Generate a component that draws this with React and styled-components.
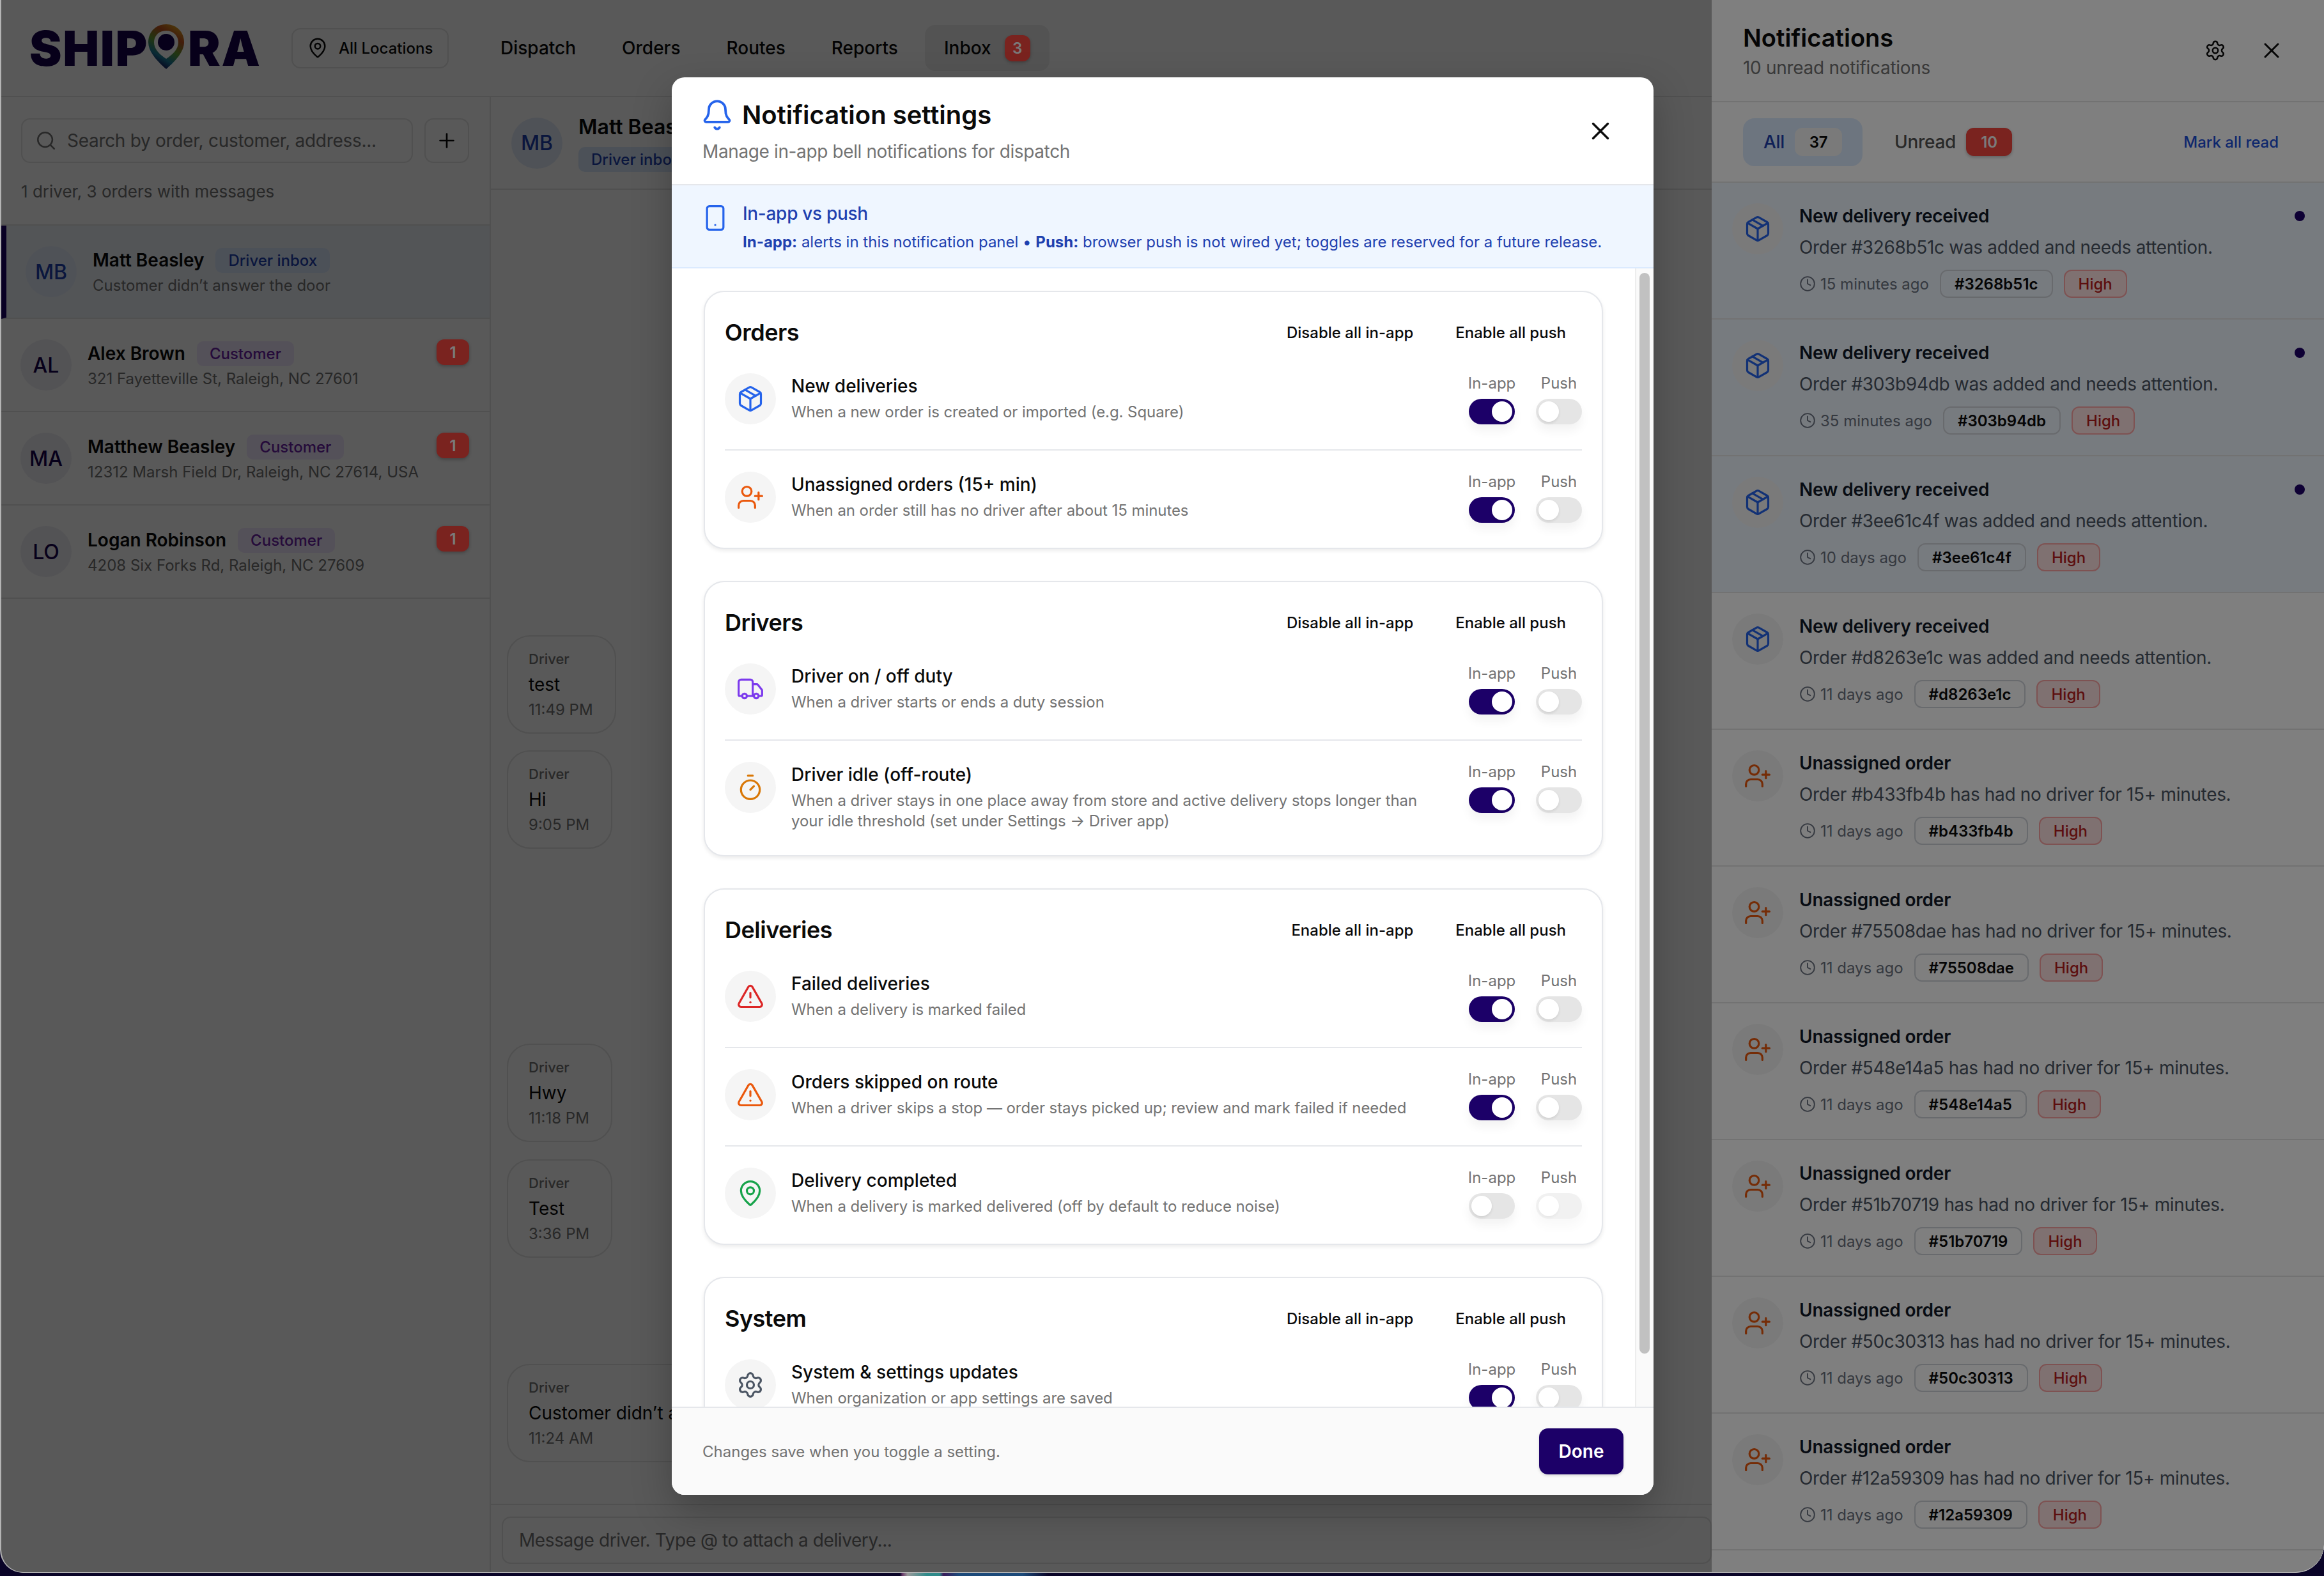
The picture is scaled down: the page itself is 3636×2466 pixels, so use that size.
import React from "react";
import styled, { createGlobalStyle } from "styled-components";
import {
  Bell,
  Clock,
  MapPin,
  Package,
  Plus,
  Search,
  Settings,
  Smartphone,
  Timer,
  TriangleAlert,
  Truck,
  UserPlus,
  X,
} from "lucide-react";

const NAVY = "#1c0068";

const GlobalStyle = createGlobalStyle`
  html, body {
    margin: 0;
    padding: 0;
    width: 3636px;
    height: 2466px;
    overflow: hidden;
    background: #0a0428;
  }
  * { box-sizing: border-box; }
  body { font-family: Inter, "Noto Sans", sans-serif; color: #0a0a0a; }
`;

const Screen = styled.div`
  position: relative;
  width: 3636px;
  height: 2466px;
  display: flex;
  flex-direction: column;
`;

const Wallpaper = styled.div`
  height: 5px;
  background: linear-gradient(
    90deg,
    #0a0428 0 1408px,
    #6a3a6a 1412px,
    #9a9a9a 1420px,
    #2f8a8a 1450px 1470px,
    #3a1a5a 1476px,
    #1c4a7a 1500px 1600px,
    #0a0428 1640px
  );
`;

const Window = styled.div`
  position: relative;
  height: 2461px;
  display: flex;
  overflow: hidden;
  background: #fff;
  border-left: 2px solid #b4b4b4;
  border-bottom: 1px solid #b4b4b4;
  border-radius: 0 0 44px 36px;
`;

const Main = styled.div`
  position: relative;
  flex: none;
  width: 2676px;
  display: flex;
  flex-direction: column;
  &::after {
    content: "";
    position: absolute;
    inset: 0;
    z-index: 1;
    background: rgba(0, 0, 0, 0.3);
  }
`;

const TopBar = styled.header`
  flex: none;
  height: 152px;
  display: flex;
  align-items: center;
  padding-left: 44px;
  border-bottom: 2px solid #e5e5e5;
`;

const Logo = styled.div`
  display: flex;
  align-items: center;
  width: 361px;
  font-family: Inter, sans-serif;
  font-weight: 900;
  font-size: 76px;
  line-height: 1;
  color: #16004d;
  letter-spacing: 1.6px;
  svg { flex: none; margin: -4px 4px 0 -2px; }
`;

const LocationButton = styled.div`
  margin-left: 49px;
  width: 246px;
  height: 63px;
  display: flex;
  align-items: center;
  gap: 16px;
  padding-left: 22px;
  border: 2px solid #e5e5e5;
  border-radius: 14px;
  font-size: 24px;
  font-weight: 500;
`;

const Nav = styled.nav`
  margin-left: 51px;
  display: flex;
  gap: 12px;
`;

const NavItem = styled.div`
  height: 72px;
  display: flex;
  align-items: center;
  gap: 21px;
  padding: 0 30px;
  border-radius: 16px;
  font-size: 28px;
  font-weight: 500;
  background: ${(p) => (p.$active ? "#f0f0f0" : "transparent")};
`;

const CountBadge = styled.span`
  position: relative;
  z-index: 2;
  display: inline-flex;
  align-items: center;
  justify-content: center;
  width: ${(p) => p.$w || 51}px;
  height: ${(p) => p.$h || 40}px;
  border-radius: 12px;
  background: #f4463f;
  color: #f5f5f5;
  font-size: 24px;
  font-weight: 600;
  box-shadow: 0 2px 5px rgba(0, 0, 0, 0.25);
`;

const Body = styled.div`
  flex: 1;
  min-height: 0;
  display: flex;
`;

const Sidebar = styled.aside`
  flex: none;
  width: 766px;
  border-right: 2px solid #e5e5e5;
`;

const SidebarTop = styled.div`
  height: 201px;
  padding: 33px 32px 0 31px;
  border-bottom: 2px solid #e5e5e5;
`;

const SearchRow = styled.div`
  display: flex;
  gap: 18px;
`;

const SearchBox = styled.div`
  flex: 1;
  height: 70px;
  display: flex;
  align-items: center;
  gap: 16px;
  padding-left: 20px;
  border: 2px solid #e5e5e5;
  border-radius: 14px;
  font-size: 28px;
  letter-spacing: -0.3px;
  color: #737373;
`;

const AddButton = styled.div`
  flex: none;
  width: 70px;
  height: 70px;
  display: flex;
  align-items: center;
  justify-content: center;
  border: 2px solid #e5e5e5;
  border-radius: 14px;
`;

const ListCount = styled.div`
  margin-top: 27px;
  font-size: 26px;
  line-height: 36px;
  color: #737373;
`;

const ThreadRow = styled.div`
  height: 146px;
  display: flex;
  align-items: center;
  gap: 25px;
  padding: 0 32px 0 30px;
  border-bottom: 2px solid #e5e5e5;
  ${CountBadge} {
    margin-bottom: 40px;
  }
  ${(p) => p.$active && `
    background: #f0f4fa;
    border-left: 8px solid ${NAVY};
  `}
`;

const Avatar = styled.div`
  flex: none;
  width: 80px;
  height: 80px;
  border-radius: 50%;
  display: flex;
  align-items: center;
  justify-content: center;
  font-size: 32px;
  font-weight: 500;
  background: ${(p) => (p.$blue ? "#e4edfb" : "#f0eff5")};
  color: ${(p) => (p.$blue ? "#1e40af" : "#16004d")};
`;

const ThreadText = styled.div`
  flex: 1;
  min-width: 0;
`;

const NameLine = styled.div`
  display: flex;
  align-items: center;
  gap: 18px;
  height: 40px;
  font-size: 28px;
  font-weight: 600;
`;

const Tag = styled.span`
  height: 39px;
  display: inline-flex;
  align-items: center;
  padding: 0 20px;
  border-radius: 10px;
  font-size: 24px;
  font-weight: 500;
  background: ${(p) => (p.$purple ? "#f3e8ff" : "#dbeafe")};
  color: ${(p) => (p.$purple ? "#6b21a8" : "#1e40af")};
`;

const ThreadSub = styled.div`
  margin-top: 4px;
  font-size: 24px;
  line-height: 32px;
  color: #737373;
`;

const Chat = styled.section`
  flex: 1;
  min-width: 0;
  display: flex;
  flex-direction: column;
`;

const ChatHead = styled.div`
  flex: none;
  height: 145px;
  display: flex;
  align-items: center;
  gap: 25px;
  padding-left: 32px;
  border-bottom: 2px solid #e5e5e5;
`;

const ChatName = styled.div`
  font-size: 32px;
  font-weight: 600;
  line-height: 40px;
  margin-bottom: 11px;
`;

const Messages = styled.div`
  flex: 1;
  min-height: 0;
  display: flex;
  flex-direction: column;
  align-items: flex-start;
  justify-content: flex-end;
  padding: 0 0 65px 25px;
  overflow: hidden;
`;

const Bubble = styled.div`
  margin-top: ${(p) => p.$gap}px;
  padding: 15px 34px 15px 32px;
  border: 2px solid #e5e5e5;
  border-radius: 36px;
  white-space: nowrap;
`;

const BubbleFrom = styled.div`
  font-size: 22px;
  line-height: 40px;
  font-weight: 500;
  color: #737373;
`;

const BubbleText = styled.div`
  font-size: 28px;
  line-height: 40px;
`;

const BubbleTime = styled.div`
  font-size: 24px;
  line-height: 40px;
  color: #737373;
`;

const Composer = styled.div`
  flex: none;
  height: 107px;
  padding: 18px 0 0 17px;
  border-top: 2px solid #e5e5e5;
`;

const ComposerField = styled.div`
  height: 74px;
  display: flex;
  align-items: center;
  padding-left: 25px;
  border: 2px solid #e5e5e5;
  border-radius: 14px;
  font-size: 28px;
  letter-spacing: -0.42px;
  color: #737373;
`;

const Panel = styled.aside`
  flex: 1;
  min-width: 0;
  display: flex;
  flex-direction: column;
  background: #fff;
`;

const PanelHead = styled.div`
  flex: none;
  height: 160px;
  display: flex;
  align-items: center;
  padding: 0 62px 0 49px;
  border-bottom: 2px solid #e5e5e5;
`;

const PanelTitles = styled.div`
  flex: 1;
`;

const PanelTitle = styled.div`
  font-size: 38px;
  line-height: 48px;
  font-weight: 600;
`;

const PanelSub = styled.div`
  margin-top: 5px;
  font-size: 28px;
  line-height: 36px;
  letter-spacing: -0.3px;
  color: #737373;
`;

const HeadIcons = styled.div`
  display: flex;
  align-items: center;
  gap: 51px;
`;

const Tabs = styled.div`
  flex: none;
  height: 126px;
  display: flex;
  align-items: center;
  gap: 18px;
  padding: 0 71px 0 49px;
  border-bottom: 2px solid #e5e5e5;
`;

const TabPill = styled.div`
  height: 75px;
  display: flex;
  align-items: center;
  gap: 16px;
  padding: 0 32px;
  border-radius: 18px;
  font-size: 28px;
  font-weight: 500;
  letter-spacing: -0.3px;
  color: ${(p) => (p.$active ? "#1e40af" : "#525252")};
  background: ${(p) => (p.$active ? "#dbeafe" : "transparent")};
`;

const TabCount = styled.span`
  width: 74px;
  height: 44px;
  display: flex;
  align-items: center;
  justify-content: center;
  border-radius: 12px;
  background: #f5f5f5;
  color: #0a0a0a;
  font-size: 24px;
  font-weight: 600;
`;

const MarkRead = styled.div`
  margin-left: auto;
  font-size: 24px;
  font-weight: 500;
  color: #1d4ed8;
`;

const Feed = styled.div`
  flex: 1;
  min-height: 0;
  overflow: hidden;
`;

const FeedRow = styled.div`
  height: 214px;
  display: flex;
  gap: 25px;
  padding: 32px 30px 0 32px;
  border-bottom: 2px solid #e5e5e5;
  background: ${(p) => (p.$unread ? "#eff6ff" : "#fff")};
`;

const IconDisc = styled.div`
  flex: none;
  width: 80px;
  height: 80px;
  border-radius: 50%;
  display: flex;
  align-items: center;
  justify-content: center;
  background: #f5f5f5;
  color: ${(p) => p.$color};
`;

const FeedText = styled.div`
  flex: 1;
  min-width: 0;
`;

const FeedTitle = styled.div`
  font-size: 28px;
  line-height: 40px;
  font-weight: 600;
  letter-spacing: -0.2px;
  color: #111827;
`;

const FeedDesc = styled.div`
  margin-top: 9px;
  font-size: 28px;
  line-height: 40px;
  letter-spacing: -0.33px;
  color: #4b5563;
`;

const FeedMeta = styled.div`
  margin-top: 15px;
  display: flex;
  align-items: center;
  gap: 17px;
`;

const TimeAgo = styled.div`
  display: flex;
  align-items: center;
  gap: 7px;
  font-size: 24px;
  color: #6b7280;
`;

const IdChip = styled.div`
  height: 44px;
  display: flex;
  align-items: center;
  padding: 0 21px;
  border: 2px solid #d1d5db;
  border-radius: 12px;
  font-size: 24px;
  font-weight: 600;
`;

const HighChip = styled.div`
  height: 44px;
  display: flex;
  align-items: center;
  padding: 0 21px;
  border: 2px solid #fca5a5;
  border-radius: 12px;
  background: #fee2e2;
  font-size: 24px;
  font-weight: 500;
  color: #b91c1c;
`;

const UnreadDot = styled.div`
  flex: none;
  width: 16px;
  height: 16px;
  margin-top: 12px;
  border-radius: 50%;
  background: ${NAVY};
`;

const Backdrop = styled.div`
  position: absolute;
  inset: 0;
  z-index: 3;
  background: rgba(0, 0, 0, 0.5);
`;

const Modal = styled.div`
  position: absolute;
  z-index: 4;
  left: 1049px;
  top: 121px;
  width: 1536px;
  height: 2218px;
  display: flex;
  flex-direction: column;
  overflow: hidden;
  background: #fff;
  border-radius: 20px;
  box-shadow: 0 24px 60px rgba(0, 0, 0, 0.25);
`;

const ModalHead = styled.div`
  flex: none;
  height: 169px;
  display: flex;
  align-items: center;
  justify-content: space-between;
  padding: 0 60px 0 48px;
  border-bottom: 2px solid #e5e7eb;
`;

const ModalTitleRow = styled.div`
  display: flex;
  align-items: center;
  gap: 13px;
  height: 50px;
  font-size: 40px;
  font-weight: 600;
  color: #0a0a0a;
  svg { margin-left: -3px; color: #2563eb; }
`;

const ModalSub = styled.div`
  margin-top: 14px;
  font-size: 28px;
  line-height: 36px;
  letter-spacing: -0.38px;
  color: #737373;
`;

const Banner = styled.div`
  flex: none;
  height: 130px;
  display: flex;
  gap: 21px;
  padding: 24px 0 0 46px;
  background: #eff6ff;
  border-bottom: 2px solid #dbeafe;
  color: #1e40af;
  svg { color: #2563eb; margin-top: 5px; flex: none; }
`;

const BannerTitle = styled.div`
  font-size: 28px;
  line-height: 40px;
  font-weight: 500;
  letter-spacing: -0.3px;
`;

const BannerText = styled.div`
  margin-top: 7px;
  font-size: 24px;
  line-height: 36px;
  b { font-weight: 700; }
`;

const ModalBody = styled.div`
  position: relative;
  flex: 1;
  min-height: 0;
  display: flex;
`;

const Sections = styled.div`
  flex: 1;
  min-width: 0;
  display: flex;
  flex-direction: column;
  gap: 50px;
  padding: 35px 50px 0;
  overflow: hidden;
`;

const Track = styled.div`
  position: relative;
  flex: none;
  width: 29px;
  border-left: 2px solid #ededed;
  background: #fafafa;
`;

const Thumb = styled.div`
  position: absolute;
  left: 5px;
  top: 7px;
  width: 16px;
  height: 1691px;
  border-radius: 8px;
  background: #c1c1c1;
`;

const Card = styled.section`
  flex: none;
  padding: 0 31px;
  border: 2px solid #e5e7eb;
  border-radius: 32px;
  background: #fff;
  box-shadow: 0 3px 6px rgba(0, 0, 0, 0.08);
`;

const CardHead = styled.div`
  display: flex;
  align-items: center;
  height: 62px;
  margin-top: 32px;
`;

const CardTitle = styled.h3`
  flex: 1;
  margin: 0;
  font-size: 36px;
  font-weight: 600;
  letter-spacing: -0.5px;
`;

const HeadAction = styled.div`
  margin-right: ${(p) => p.$gap}px;
  font-size: 24px;
  font-weight: 500;
`;

const SettingRow = styled.div`
  display: flex;
  gap: 24px;
  padding: 33px 0 39px;
  & + & {
    border-top: 2px solid #e5e7eb;
  }
`;

const SettingText = styled.div`
  flex: 1;
  min-width: 0;
`;

const SettingTitle = styled.div`
  font-size: 28px;
  line-height: 40px;
  font-weight: 500;
`;

const SettingDesc = styled.div`
  margin: 5px 0 -2px;
  max-width: 1000px;
  font-size: 24px;
  line-height: 32px;
  letter-spacing: -0.07px;
  color: #737373;
`;

const Toggles = styled.div`
  flex: none;
  display: flex;
  gap: 33px;
`;

const ToggleCol = styled.div`
  width: 72px;
  display: flex;
  flex-direction: column;
  align-items: center;
  gap: 8px;
  font-size: 24px;
  line-height: 32px;
  color: #737373;
  white-space: nowrap;
`;

const Toggle = styled.div`
  width: 72px;
  height: 40px;
  display: flex;
  align-items: center;
  justify-content: ${(p) => (p.$on ? "flex-end" : "flex-start")};
  padding: 0 4px;
  border-radius: 20px;
  background: ${(p) => (p.$on ? NAVY : "#e5e5e5")};
  opacity: ${(p) => (p.$disabled ? 0.5 : 1)};
  box-shadow: 0 10px 16px rgba(0, 0, 0, 0.05);
  &::after {
    content: "";
    width: 32px;
    height: 32px;
    border-radius: 50%;
    background: #fff;
    box-shadow: 0 2px 4px rgba(0, 0, 0, 0.1);
  }
`;

const ModalFoot = styled.div`
  position: relative;
  flex: none;
  height: 138px;
  display: flex;
  align-items: center;
  justify-content: space-between;
  padding: 0 47px 0 48px;
  border-top: 2px solid #e5e7eb;
  background: #fafafa;
  font-size: 24px;
  color: #737373;
`;

const DoneButton = styled.button`
  width: 132px;
  height: 72px;
  border: 0;
  border-radius: 14px;
  background: ${NAVY};
  color: #fff;
  font-family: inherit;
  font-size: 28px;
  font-weight: 600;
  box-shadow: 0 2px 4px rgba(0, 0, 0, 0.15);
`;

const threads = [
  { initials: "AL", name: "Alex Brown", sub: "321 Fayetteville St, Raleigh, NC 27601" },
  { initials: "MA", name: "Matthew Beasley", sub: "12312 Marsh Field Dr, Raleigh, NC 27614, USA" },
  { initials: "LO", name: "Logan Robinson", sub: "4208 Six Forks Rd, Raleigh, NC 27609" },
];

const bubbles = [
  { text: "test", time: "11:49 PM", gap: 0 },
  { text: "Hi", time: "9:05 PM", gap: 26 },
  { text: "Hwy", time: "11:18 PM", gap: 305 },
  { text: "Test", time: "3:36 PM", gap: 27 },
  { text: "Customer didn’t answer the door", time: "11:24 AM", gap: 166 },
];

const feed = [
  ["3268b51c", "15 minutes ago", true],
  ["303b94db", "35 minutes ago", true],
  ["3ee61c4f", "10 days ago", true],
  ["d8263e1c", "11 days ago", false],
  ["b433fb4b", "11 days ago", false],
  ["75508dae", "11 days ago", false],
  ["548e14a5", "11 days ago", false],
  ["51b70719", "11 days ago", false],
  ["50c30313", "11 days ago", false],
  ["12a59309", "11 days ago", false],
];

const row = (Icon, color, title, desc, inApp = true, pushOff = false) => ({
  Icon, color, title, desc, inApp, pushOff,
});

const sections = [
  {
    title: "Orders",
    action: "Disable all in-app",
    rows: [
      row(Package, "#2563eb", "New deliveries", "When a new order is created or imported (e.g. Square)"),
      row(UserPlus, "#ea580c", "Unassigned orders (15+ min)", "When an order still has no driver after about 15 minutes"),
    ],
  },
  {
    title: "Drivers",
    action: "Disable all in-app",
    rows: [
      row(Truck, "#7c3aed", "Driver on / off duty", "When a driver starts or ends a duty session"),
      row(Timer, "#d97706", "Driver idle (off-route)", "When a driver stays in one place away from store and active delivery stops longer than your idle threshold (set under Settings → Driver app)"),
    ],
  },
  {
    title: "Deliveries",
    action: "Enable all in-app",
    rows: [
      row(TriangleAlert, "#dc2626", "Failed deliveries", "When a delivery is marked failed"),
      row(TriangleAlert, "#ea580c", "Orders skipped on route", "When a driver skips a stop — order stays picked up; review and mark failed if needed"),
      row(MapPin, "#16a34a", "Delivery completed", "When a delivery is marked delivered (off by default to reduce noise)", false, true),
    ],
  },
  {
    title: "System",
    action: "Disable all in-app",
    rows: [
      row(Settings, "#4b5563", "System & settings updates", "When organization or app settings are saved"),
    ],
  },
];

const LogoPin = () => (
  <svg width="60" height="72" viewBox="0 0 60 72">
    <defs>
      <linearGradient id="pinRing" x1="0.85" y1="0" x2="0.35" y2="1">
        <stop offset="0" stopColor="#e0b020" />
        <stop offset="0.28" stopColor="#c0501e" />
        <stop offset="0.55" stopColor="#5f9a30" />
        <stop offset="0.78" stopColor="#1a7a9a" />
        <stop offset="1" stopColor="#16004d" />
      </linearGradient>
    </defs>
    <path d="M30 1C14 1 2 13 2 29c0 15 14 30 28 42 14-12 28-27 28-42C58 13 46 1 30 1z" fill="url(#pinRing)" />
    <path d="M30 11c-11 0-19 8-19 18 0 12 10 20 19 26 9-6 19-14 19-26 0-10-8-18-19-18z" fill="#fff" />
    <circle cx="30" cy="29" r="13" fill="#16004d" />
  </svg>
);

const App = () => {
  return (
    <Screen>
      <GlobalStyle />
      <Window>
        <Main>
          <TopBar>
            <Logo>
              SHIP
              <LogoPin />
              RA
            </Logo>
            <LocationButton>
              <MapPin size={34} strokeWidth={1.75} />
              All Locations
            </LocationButton>
            <Nav>
              <NavItem>Dispatch</NavItem>
              <NavItem>Orders</NavItem>
              <NavItem>Routes</NavItem>
              <NavItem>Reports</NavItem>
              <NavItem $active>
                Inbox
                <CountBadge $w={40} $h={41}>3</CountBadge>
              </NavItem>
            </Nav>
          </TopBar>
          <Body>
            <Sidebar>
              <SidebarTop>
                <SearchRow>
                  <SearchBox>
                    <Search size={34} strokeWidth={1.75} />
                    Search by order, customer, address...
                  </SearchBox>
                  <AddButton>
                    <Plus size={36} strokeWidth={1.75} />
                  </AddButton>
                </SearchRow>
                <ListCount>1 driver, 3 orders with messages</ListCount>
              </SidebarTop>
              <ThreadRow $active>
                <Avatar $blue>MB</Avatar>
                <ThreadText>
                  <NameLine>
                    Matt Beasley
                    <Tag>Driver inbox</Tag>
                  </NameLine>
                  <ThreadSub>Customer didn’t answer the door</ThreadSub>
                </ThreadText>
              </ThreadRow>
              {threads.map((t) => (
                <ThreadRow key={t.initials}>
                  <Avatar>{t.initials}</Avatar>
                  <ThreadText>
                    <NameLine>
                      {t.name}
                      <Tag $purple>Customer</Tag>
                    </NameLine>
                    <ThreadSub>{t.sub}</ThreadSub>
                  </ThreadText>
                  <CountBadge>1</CountBadge>
                </ThreadRow>
              ))}
            </Sidebar>
            <Chat>
              <ChatHead>
                <Avatar $blue>MB</Avatar>
                <div>
                  <ChatName>Matt Beasley</ChatName>
                  <Tag>Driver inbox</Tag>
                </div>
              </ChatHead>
              <Messages>
                {bubbles.map((b) => (
                  <Bubble key={b.time} $gap={b.gap}>
                    <BubbleFrom>Driver</BubbleFrom>
                    <BubbleText>{b.text}</BubbleText>
                    <BubbleTime>{b.time}</BubbleTime>
                  </Bubble>
                ))}
              </Messages>
              <Composer>
                <ComposerField>Message driver. Type @ to attach a delivery...</ComposerField>
              </Composer>
            </Chat>
          </Body>
        </Main>
        <Panel>
          <PanelHead>
            <PanelTitles>
              <PanelTitle>Notifications</PanelTitle>
              <PanelSub>10 unread notifications</PanelSub>
            </PanelTitles>
            <HeadIcons>
              <Settings size={34} strokeWidth={1.75} />
              <X size={40} strokeWidth={1.75} />
            </HeadIcons>
          </PanelHead>
          <Tabs>
            <TabPill $active>
              All
              <TabCount>37</TabCount>
            </TabPill>
            <TabPill>
              Unread
              <CountBadge $w={72} $h={44}>10</CountBadge>
            </TabPill>
            <MarkRead>Mark all read</MarkRead>
          </Tabs>
          <Feed>
            {feed.map(([id, time, unread], i) => {
              const delivery = i < 4;
              const Icon = delivery ? Package : UserPlus;
              return (
                <FeedRow key={id} $unread={unread}>
                  <IconDisc $color={delivery ? "#2563eb" : "#ea580c"}>
                    <Icon size={44} strokeWidth={1.75} />
                  </IconDisc>
                  <FeedText>
                    <FeedTitle>{delivery ? "New delivery received" : "Unassigned order"}</FeedTitle>
                    <FeedDesc>
                      {delivery
                        ? `Order #${id} was added and needs attention.`
                        : `Order #${id} has had no driver for 15+ minutes.`}
                    </FeedDesc>
                    <FeedMeta>
                      <TimeAgo>
                        <Clock size={26} strokeWidth={1.75} />
                        {time}
                      </TimeAgo>
                      <IdChip>#{id}</IdChip>
                      <HighChip>High</HighChip>
                    </FeedMeta>
                  </FeedText>
                  {unread && <UnreadDot />}
                </FeedRow>
              );
            })}
            <FeedRow>
              <IconDisc $color="#ea580c" />
            </FeedRow>
          </Feed>
        </Panel>
        <Backdrop />
        <Modal>
          <ModalHead>
            <div>
              <ModalTitleRow>
                <Bell size={52} strokeWidth={1.75} />
                Notification settings
              </ModalTitleRow>
              <ModalSub>Manage in-app bell notifications for dispatch</ModalSub>
            </div>
            <X size={46} strokeWidth={1.75} />
          </ModalHead>
          <Banner>
            <Smartphone size={44} strokeWidth={1.75} />
            <div>
              <BannerTitle>In-app vs push</BannerTitle>
              <BannerText>
                <b>In-app:</b> alerts in this notification panel • <b>Push:</b> browser push is not wired yet; toggles are reserved for a future release.
              </BannerText>
            </div>
          </Banner>
          <ModalBody>
            <Sections>
              {sections.map((s) => (
                <Card key={s.title}>
                  <CardHead>
                    <CardTitle>{s.title}</CardTitle>
                    <HeadAction $gap={66}>{s.action}</HeadAction>
                    <HeadAction $gap={25}>Enable all push</HeadAction>
                  </CardHead>
                  {s.rows.map((r) => (
                    <SettingRow key={r.title}>
                      <IconDisc $color={r.color}>
                        <r.Icon size={44} strokeWidth={1.75} />
                      </IconDisc>
                      <SettingText>
                        <SettingTitle>{r.title}</SettingTitle>
                        <SettingDesc>{r.desc}</SettingDesc>
                      </SettingText>
                      <Toggles>
                        <ToggleCol>
                          In-app
                          <Toggle $on={r.inApp} />
                        </ToggleCol>
                        <ToggleCol>
                          Push
                          <Toggle $disabled={r.pushOff} />
                        </ToggleCol>
                      </Toggles>
                    </SettingRow>
                  ))}
                </Card>
              ))}
            </Sections>
            <Track>
              <Thumb />
            </Track>
          </ModalBody>
          <ModalFoot>
            Changes save when you toggle a setting.
            <DoneButton>Done</DoneButton>
          </ModalFoot>
        </Modal>
      </Window>
      <Wallpaper />
    </Screen>
  );
};

export default App;
